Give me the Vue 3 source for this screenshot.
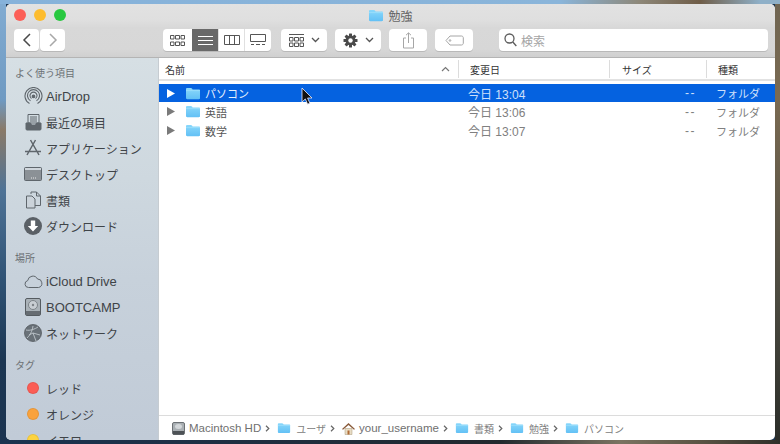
<template>
  <div class="desktop">
    <svg class="defs" width="0" height="0">
      <defs>
        <linearGradient id="fg" x1="0" y1="0" x2="0" y2="1">
          <stop offset="0" stop-color="#8ad8fb" />
          <stop offset="1" stop-color="#62c0f5" />
        </linearGradient>
        <symbol id="folder" viewBox="0 0 16 13">
          <path d="M1 2.200C1 1.400 1.500 1 2.200 1h3.600c.6 0 .9.2 1.200.6l.6.8h6.300c.8 0 1.100.4 1.100 1.100v7.600c0 .8-.4 1.200-1.200 1.200H2.200C1.400 12.300 1 11.900 1 11.100z" fill="url(#fg)" />
          <path d="M1 3.600h14" stroke="#a4e2fc" stroke-width=".7" />
        </symbol>
      </defs>
    </svg>

    <div class="window">
      <header class="toolbar">
        <div class="titlebar">
          <div class="lights">
            <span class="light red"></span>
            <span class="light yellow"></span>
            <span class="light green"></span>
          </div>
          <div class="title">
            <svg class="title-folder"><use href="#folder" /></svg>
            <span>勉強</span>
          </div>
        </div>
        <div class="tools">
          <div class="nav">
            <button class="btn nav-btn">
              <svg width="10" height="14" viewBox="0 0 10 14"><path d="M8 1 2 7l6 6" fill="none" stroke="#4a4a4a" stroke-width="1.500" /></svg>
            </button>
            <button class="btn nav-btn">
              <svg width="10" height="14" viewBox="0 0 10 14"><path d="m2 1 6 6-6 6" fill="none" stroke="#a8a8a8" stroke-width="1.500" /></svg>
            </button>
          </div>
          <div class="btn views">
            <span class="view w29">
              <svg width="15" height="11" viewBox="0 0 15 11" fill="none" stroke="#555"><path d="M.5.500h3.500v3.500H.5zM5.500.500h4v3.500h-4zM11 .500h3.500v3.500H11zM.5 7h3.500v3.500H.5zM5.500 7h4v3.500h-4zM11 7h3.500v3.500H11z" /></svg>
            </span>
            <span class="view active w27">
              <svg width="15" height="11" viewBox="0 0 15 11" stroke="#fff"><path d="M0 1.500h15M0 5.500h15M0 9.500h15" /></svg>
            </span>
            <span class="view w26 sep">
              <svg width="16" height="10" viewBox="0 0 16 10" fill="none" stroke="#555"><path d="M.5.500h15v9H.5zM5.500.500v9M10.500.500v9" /></svg>
            </span>
            <span class="view w26 sep">
              <svg width="16" height="12" viewBox="0 0 16 12" fill="none" stroke="#555"><path d="M.5.500h15v7H.5zM1 10.500h3M6 10.500h4M12 10.500h3" /></svg>
            </span>
          </div>
          <div class="btn combo group-btn">
            <svg width="15" height="13" viewBox="0 0 15 13" fill="none" stroke="#555"><path d="M0 .500h15M.5 3.500h3.500V7H.5zM5.500 3.500h4V7h-4zM11 3.500h3.500V7H11zM.5 9h3.500v3.500H.5zM5.500 9h4v3.500h-4zM11 9h3.500v3.500H11z" /></svg>
            <svg width="9" height="6" viewBox="0 0 9 6"><path d="m1 1 3.500 3.500L8 1" fill="none" stroke="#555" stroke-width="1.300" /></svg>
          </div>
          <div class="btn combo action-btn">
            <svg width="15" height="15" viewBox="0 0 15 15">
              <g fill="#4a4a4a">
                <circle cx="7.500" cy="7.500" r="5" />
                <rect x="6" y="0.500" width="3" height="14" rx=".5" />
                <rect x="6" y="0.500" width="3" height="14" rx=".5" transform="rotate(45 7.500 7.500)" />
                <rect x="6" y="0.500" width="3" height="14" rx=".5" transform="rotate(90 7.500 7.500)" />
                <rect x="6" y="0.500" width="3" height="14" rx=".5" transform="rotate(135 7.500 7.500)" />
              </g>
              <circle cx="7.500" cy="7.500" r="2.200" fill="#fff" />
            </svg>
            <svg width="9" height="6" viewBox="0 0 9 6"><path d="m1 1 3.500 3.500L8 1" fill="none" stroke="#555" stroke-width="1.300" /></svg>
          </div>
          <div class="btn share-btn">
            <svg width="13" height="17" viewBox="0 0 13 17" fill="none" stroke="#a6a6a6"><path d="M4 6H1.500v10h10V6H9M6.500 11V1M4 3.200 6.500 .8 9 3.200" /></svg>
          </div>
          <div class="btn tag-btn">
            <svg width="19" height="11" viewBox="0 0 19 11" fill="none" stroke="#a6a6a6"><path d="M5 1h11.500c1 0 1.800.8 1.800 1.800v5.400c0 1-.8 1.800-1.800 1.800H5L1 5.500z" /><circle cx="5" cy="5.500" r=".8" /></svg>
          </div>
          <div class="btn search">
            <svg width="13" height="14" viewBox="0 0 13 14" fill="none" stroke="#5c5c5c" stroke-width="1.300"><circle cx="5.500" cy="5.500" r="4.500" /><path d="m8.800 9 3.500 4" /></svg>
            <span>検索</span>
          </div>
        </div>
      </header>

      <div class="content">
        <aside class="sidebar">
          <div v-for="section in sections" :key="section.name" class="section">
            <h3>{{ section.name }}</h3>
            <div v-for="item in section.items" :key="item.label" class="side-item">
              <span class="side-icon">
                <span v-if="item.tag" class="dot" :style="{ background: item.tag }"></span>
                <svg v-else-if="item.icon === 'airdrop'" width="19" height="19" viewBox="0 0 19 19" fill="none" stroke="#5f666c" stroke-width="1.100"><path d="M5.500 16.500a8.500 8.500 0 1 1 8 0M6.500 13.800a6 6 0 1 1 6 0M7.500 11.500a3.500 3.500 0 1 1 4 0" /><circle cx="9.500" cy="9.300" r="1.300" fill="#5f666c" /></svg>
                <svg v-else-if="item.icon === 'recent'" width="17" height="18" viewBox="0 0 17 18" fill="none" stroke="#5f666c"><path d="M3 1.500h11V10H3z" /><path d="M5 4h7M5 6h7M5 8h7" /><path d="M1 10h4.500l1 2h4l1-2H16v6a1 1 0 0 1-1 1H2a1 1 0 0 1-1-1z" fill="#5f666c" /></svg>
                <svg v-else-if="item.icon === 'apps'" width="18" height="18" viewBox="0 0 18 18" fill="none" stroke="#5f666c" stroke-width="1.500"><path d="M6.500 1 15 16M11.500 1 3 16M1 12.500h16" /></svg>
                <svg v-else-if="item.icon === 'desktop'" width="18" height="14" viewBox="0 0 18 14"><rect x=".5" y=".5" width="17" height="13" rx="1" fill="#8b9196" stroke="#5f666c" /><rect x="1" y="1" width="16" height="2" fill="#cfd6dc" /><path d="M7 11h1M9 11h1M11 11h1" stroke="#e8e8e8" /></svg>
                <svg v-else-if="item.icon === 'docs'" width="17" height="18" viewBox="0 0 17 18" fill="none" stroke="#5f666c"><path d="M1.500 5h5.500l3 3v9h-8.500z" fill="#cbd3da" /><path d="M6 3V1h5.500l4 4v9.500H10M11.500 1v4h4" /></svg>
                <svg v-else-if="item.icon === 'download'" width="18" height="18" viewBox="0 0 18 18"><circle cx="9" cy="9" r="9" fill="#5a6066" /><path d="M6.800 3.500h4.400V9h3L9 14.500 3.800 9h3z" fill="#fff" /></svg>
                <svg v-else-if="item.icon === 'cloud'" width="19" height="13" viewBox="0 0 19 13" fill="none" stroke="#5f666c"><path d="M4.500 12.500a3.500 3.500 0 0 1-.8-6.900A5.200 5.200 0 0 1 13.500 4a4.300 4.300 0 0 1 1 8.500z" /></svg>
                <svg v-else-if="item.icon === 'disk'" width="16" height="18" viewBox="0 0 16 18"><rect x=".5" y=".5" width="15" height="17" rx="1.500" fill="#aab2b8" stroke="#555b60" /><circle cx="8" cy="7" r="4.500" fill="#c8ced3" stroke="#7d8489" /><circle cx="8" cy="7" r="1.200" fill="#7d8489" /><rect x="1" y="13" width="14" height="4" fill="#666c72" /></svg>
                <svg v-else-if="item.icon === 'network'" width="18" height="18" viewBox="0 0 18 18" fill="none" stroke="#c9d0d6" stroke-width=".8"><circle cx="9" cy="9" r="8.500" fill="#697178" stroke="#555b60" /><path d="M2 6c4 1 9-1 12-3M3 14c3-3 5-6 6-12M9 9l7 2M9 9l3 8M5 11l4-2" /></svg>
              </span>
              <span class="side-label" :class="{ latin: item.latin }">{{ item.label }}</span>
            </div>
          </div>
        </aside>

        <main class="main">
          <div class="list-head">
            <div class="col col-name head-cell">名前
              <svg width="9" height="6" viewBox="0 0 9 6"><path d="M1 5 4.500 1.500 8 5" fill="none" stroke="#777" stroke-width="1.200" /></svg>
            </div>
            <div class="col col-date head-cell">変更日</div>
            <div class="col col-size head-cell">サイズ</div>
            <div class="col col-kind head-cell">種類</div>
          </div>
          <div class="rows">
            <div v-for="(row, i) in rows" :key="row.name" class="row" :class="{ selected: i === 0 }">
              <div class="col col-name">
                <svg class="tri" width="8" height="9" viewBox="0 0 8 9"><path d="M0 0l8 4.500L0 9z" /></svg>
                <svg class="row-folder"><use href="#folder" /></svg>
                <span>{{ row.name }}</span>
              </div>
              <div class="col col-date">{{ row.date }}</div>
              <div class="col col-size cell-size">--</div>
              <div class="col col-kind">フォルダ</div>
            </div>
          </div>
          <div class="pathbar">
            <template v-for="(crumb, i) in crumbs" :key="crumb.label">
              <svg v-if="crumb.icon === 'disk'" class="crumb-icon" width="13" height="13" viewBox="0 0 13 13"><rect x=".5" y=".5" width="12" height="12" rx="1.500" fill="#a9afb3" stroke="#6c7175" /><ellipse cx="6.500" cy="4.500" rx="3.500" ry="2.500" fill="#d3d7da" /><rect x="1" y="9" width="11" height="3.500" fill="#4d5256" /></svg>
              <svg v-else-if="crumb.icon === 'home'" class="crumb-icon" width="13" height="13" viewBox="0 0 13 13"><path d="M3 6.500h7V12.500H3z" fill="#e8dcc4" stroke="#a89878" stroke-width=".5" /><path d="M0 7 6.500 1 13 7l-1 .8L6.500 3 1 7.800z" fill="#8a5a3a" /><rect x="5.500" y="8.500" width="2" height="4" fill="#b06a35" /></svg>
              <svg v-else class="crumb-icon crumb-folder"><use href="#folder" /></svg>
              <span class="crumb-label" :class="{ cjk: !crumb.latin }">{{ crumb.label }}</span>
              <svg v-if="i < crumbs.length - 1" class="crumb-sep" width="5" height="7" viewBox="0 0 5 7"><path d="m1 .8 2.800 2.700L1 6.200" fill="none" stroke="#666" stroke-width="1.200" /></svg>
            </template>
          </div>
        </main>
      </div>
    </div>

    <svg class="cursor" width="13" height="19" viewBox="0 0 13 19">
      <path d="M1 1v14l3.300-3.100 2.300 5.300 2.300-1-2.300-5.200H11z" fill="#111" stroke="#eef" stroke-width=".8" />
    </svg>
  </div>
</template>

<script setup>
const sections = [
  {
    name: 'よく使う項目',
    items: [
      { label: 'AirDrop', icon: 'airdrop', latin: true },
      { label: '最近の項目', icon: 'recent' },
      { label: 'アプリケーション', icon: 'apps' },
      { label: 'デスクトップ', icon: 'desktop' },
      { label: '書類', icon: 'docs' },
      { label: 'ダウンロード', icon: 'download' },
    ],
  },
  {
    name: '場所',
    items: [
      { label: 'iCloud Drive', icon: 'cloud', latin: true },
      { label: 'BOOTCAMP', icon: 'disk', latin: true },
      { label: 'ネットワーク', icon: 'network' },
    ],
  },
  {
    name: 'タグ',
    items: [
      { label: 'レッド', tag: '#fb5d55' },
      { label: 'オレンジ', tag: '#f9a23c' },
      { label: 'イエロー', tag: '#fdd33f' },
    ],
  },
]

const rows = [
  { name: 'パソコン', date: '今日 13:04' },
  { name: '英語', date: '今日 13:06' },
  { name: '数学', date: '今日 13:07' },
]

const crumbs = [
  { label: 'Macintosh HD', icon: 'disk', latin: true },
  { label: 'ユーザ', icon: 'folder' },
  { label: 'your_username', icon: 'home', latin: true },
  { label: '書類', icon: 'folder' },
  { label: '勉強', icon: 'folder' },
  { label: 'パソコン', icon: 'folder' },
]
</script>

<style>
html,
body {
  margin: 0;
  background: #1c3550;
}
</style>

<style scoped>
.desktop {
  position: relative;
  width: 780px;
  height: 444px;
  padding: 4px 5px 4px 6px;
  box-sizing: border-box;
  overflow: hidden;
  font-family: "Liberation Sans", "Noto Sans CJK JP", sans-serif;
  background:
    linear-gradient(90deg, #86b2da 0, #8ab5da 560px, #8d8778 640px, #6f5d48 700px, #8fb0c8 760px) top / 100% 4px no-repeat,
    linear-gradient(90deg, #1a3350 0, #1d3046 170px, #22292e 500px, #7a7361 620px, #5b5444 700px, #2f2f2a 780px) bottom / 100% 4px no-repeat,
    linear-gradient(180deg, #6f6552 0, #7a6a52 100px, #4b4a40 300px, #2a2c28 444px) right / 5px 100% no-repeat,
    linear-gradient(180deg, #82acd2 0, #6f9ac2 100px, #8a7a68 130px, #4f7396 190px, #2f5274 280px, #1c3652 360px, #1a3350 444px) left / 6px 100% no-repeat;
}
.defs {
  position: absolute;
}
.window {
  display: flex;
  flex-direction: column;
  height: 100%;
  border-radius: 5px;
  overflow: hidden;
  background: #fff;
}
.toolbar {
  height: 54px;
  flex: none;
  box-sizing: border-box;
  border-bottom: 1px solid #b4b4b4;
  background: linear-gradient(180deg, #e2e2e2 0, #dfdfdf 30%, #d8d8d8 45%, #d7d7d7 85%, #d0d0d0 100%);
}
.titlebar {
  position: relative;
  height: 25px;
  display: flex;
  align-items: center;
  justify-content: center;
}
.lights {
  position: absolute;
  left: 8px;
  top: 5px;
  display: flex;
  gap: 8px;
}
.light {
  width: 12px;
  height: 12px;
  border-radius: 50%;
}
.red {
  background: #fc5f57;
}
.yellow {
  background: #fdbc2e;
}
.green {
  background: #28c840;
}
.title {
  display: flex;
  align-items: center;
  gap: 4px;
  padding-bottom: 3px;
  font-size: 12px;
  color: #666;
}
.title-folder {
  width: 16px;
  height: 13px;
}
.tools {
  display: flex;
  align-items: stretch;
  height: 22px;
  padding: 0 7px 0 8px;
}
.btn {
  display: flex;
  align-items: center;
  justify-content: center;
  box-sizing: border-box;
  padding: 0;
  border: 0;
  border-radius: 4px;
  background: #fff;
  box-shadow: 0 1px 0 #b9b9b9;
}
.nav {
  display: flex;
  gap: 1px;
  margin-right: 98px;
}
.nav-btn {
  width: 25px;
}
.views {
  width: 108px;
  margin-right: 10px;
  overflow: hidden;
  justify-content: flex-start;
}
.view {
  display: flex;
  align-items: center;
  justify-content: center;
  height: 100%;
}
.w29 {
  width: 29px;
}
.w27 {
  width: 27px;
}
.w26 {
  width: 26px;
}
.sep {
  box-shadow: -1px 0 0 #e0e0e0;
}
.active {
  background: #696969;
}
.combo {
  width: 46px;
  gap: 7px;
  margin-right: 8px;
}
.share-btn,
.tag-btn {
  width: 38px;
  margin-right: 8px;
}
.tag-btn {
  margin-right: 26px;
}
.search {
  flex: 1;
  justify-content: flex-start;
  gap: 4px;
  padding-left: 5px;
  font-size: 12px;
  color: #a4a4a4;
}
.content {
  flex: 1;
  display: flex;
  min-height: 0;
}
.sidebar {
  width: 153px;
  flex: none;
  box-sizing: border-box;
  padding-top: 5px;
  overflow: hidden;
  border-right: 1px solid #c6ccd1;
  background: linear-gradient(180deg, #d6dfe4 0, #ced8df 120px, #c7d1db 220px, #c1cbd7 380px);
}
.section {
  margin-bottom: 9px;
}
.section h3 {
  margin: 0 0 0 9px;
  height: 20px;
  line-height: 22px;
  font-size: 10px;
  font-weight: 400;
  color: #6c7175;
}
.side-item {
  display: flex;
  align-items: center;
  height: 26px;
  color: #3f4448;
  font-size: 12px;
}
.latin {
  font-size: 13px;
}
.side-icon {
  width: 40px;
  display: flex;
  align-items: center;
  justify-content: center;
  padding-left: 14px;
  box-sizing: border-box;
  flex: none;
}
.dot {
  width: 12px;
  height: 12px;
  border-radius: 50%;
  box-sizing: border-box;
  border: 1px solid rgba(0, 0, 0, 0.08);
}
.main {
  flex: 1;
  min-width: 0;
  display: flex;
  flex-direction: column;
}
.list-head {
  display: flex;
  height: 23px;
  flex: none;
  box-sizing: border-box;
  border-bottom: 2px solid #e2e2e2;
}
.col {
  box-sizing: border-box;
  flex: none;
  display: flex;
  align-items: center;
}
.col-name {
  width: 299px;
}
.col-date {
  width: 151px;
}
.col-size {
  width: 97px;
}
.col-kind {
  flex: 1;
}
.head-cell {
  margin: 2px 0 0;
  height: 18px;
  padding-left: 6px;
  font-size: 10px;
  color: #333;
  border-left: 1px solid #dcdcdc;
}
.head-cell.col-date {
  padding-left: 11px;
}
.head-cell.col-size {
  padding-left: 12px;
}
.head-cell.col-kind {
  padding-left: 11px;
}
.head-cell.col-name {
  border-left: 0;
  justify-content: space-between;
  padding-right: 8px;
}
.rows {
  flex: 1;
  padding-top: 3px;
  font-size: 11px;
  color: #808080;
}
.row {
  display: flex;
  height: 19px;
  align-items: center;
}
.row .col-name {
  padding-left: 8px;
  color: #555;
}
.row .col-date {
  padding-left: 10px;
  font-size: 12px;
}
.cell-size {
  justify-content: flex-end;
  padding-right: 10px;
  font-size: 12px;
  letter-spacing: 1.500px;
}
.row .col-kind {
  padding-left: 10px;
  white-space: nowrap;
}
.tri {
  fill: #7a7a7a;
  margin-right: 10px;
}
.row-folder {
  width: 16px;
  height: 13px;
  margin-right: 4px;
}
.selected {
  height: 18px;
  background: #0562e0;
  color: #cfe0fa;
}
.selected .col-name {
  color: #e6effc;
}
.selected .tri {
  fill: #fff;
}
.pathbar {
  flex: none;
  height: 25px;
  display: flex;
  align-items: center;
  box-sizing: border-box;
  padding-left: 13px;
  border-top: 1px solid #dcdcdc;
  font-size: 11.500px;
  color: #707070;
  white-space: nowrap;
}
.crumb-label.cjk {
  font-size: 10px;
  color: #808080;
}
.crumb-icon {
  flex: none;
  margin-right: 4px;
}
.crumb-folder {
  width: 14px;
  height: 12px;
  margin-right: 5px;
}
.crumb-sep {
  flex: none;
  margin: 0 7px 0 4px;
}
.cursor {
  position: absolute;
  left: 301px;
  top: 87px;
}
</style>
